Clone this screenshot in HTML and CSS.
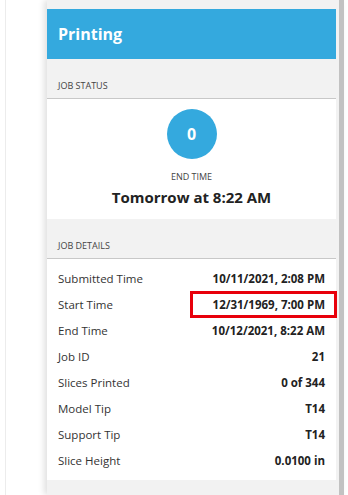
FILE: index.html
```html
<!DOCTYPE html>
<html lang="en">
<head>
    <meta charset="UTF-8">
    <meta name="viewport" content="width=device-width, initial-scale=1.0">
    <title>Printing</title>
    <link rel="stylesheet" href="styles.css">
</head>
<body>
    <div class="page">
        <!-- left gutter -->
        <div class="gutter"></div>

        <!-- job panel -->
        <aside class="panel">
            <div class="panel-inner">
                <header class="panel-header">Printing</header>

                <div class="section-title">Job Status</div>
                <section class="status">
                    <div class="badge">0</div>
                    <div class="status-label">End Time</div>
                    <div class="status-value">Tomorrow at 8:22 AM</div>
                </section>

                <div class="section-title">Job Details</div>
                <section class="details">
                    <div class="row"><span>Submitted Time</span><b>10/11/2021, 2:08 PM</b></div>
                    <div class="row highlight"><span>Start Time</span><b>12/31/1969, 7:00 PM</b></div>
                    <div class="row"><span>End Time</span><b>10/12/2021, 8:22 AM</b></div>
                    <div class="row"><span>Job ID</span><b>21</b></div>
                    <div class="row"><span>Slices Printed</span><b>0 of 344</b></div>
                    <div class="row"><span>Model Tip</span><b>T14</b></div>
                    <div class="row"><span>Support Tip</span><b>T14</b></div>
                    <div class="row"><span>Slice Height</span><b>0.0100 in</b></div>
                </section>
            </div>
            <div class="scrollbar"></div>
        </aside>
    </div>
</body>
</html>
```

FILE: styles.css
```css
* {
    margin: 0;
    padding: 0;
    box-sizing: border-box;
    font-family: "Open Sans", "Noto Sans", sans-serif;
}

body {
    background-color: #fff;
    color: #333;
}

.page {
    display: flex;
    height: 495px;
    overflow: hidden;
}

.gutter {
    flex-shrink: 0;
    border-left: 1px solid #ececec;
    margin-left: 5px;
    width: 42px;
}

/* panel */
.panel {
    display: flex;
    width: 297px;
    background-color: #f2f2f2;
    box-shadow: -3px 0 6px rgba(0, 0, 0, 0.12);
    position: relative;
    z-index: 1;
}

.panel-inner {
    width: 292px;
    padding-top: 9px;
    padding-right: 3px;
}

.scrollbar {
    width: 5px;
    background-color: #c2c2c2;
}

.panel-header {
    height: 50px;
    background-color: #34a9de;
    color: #fff;
    font-size: 16px;
    font-weight: 700;
    padding-left: 11px;
    display: flex;
    align-items: center;
}

.section-title {
    height: 40px;
    padding: 0 11px 6px;
    display: flex;
    align-items: flex-end;
    font-size: 9px;
    text-transform: uppercase;
    color: #444;
    border-bottom: 1px solid #c8c8c8;
}

/* job status */
.status {
    background-color: #fff;
    height: 120px;
    display: flex;
    flex-direction: column;
    align-items: center;
    padding-top: 10px;
}

.badge {
    width: 50px;
    height: 50px;
    border-radius: 50%;
    background-color: #34a9de;
    color: #fff;
    font-size: 16px;
    font-weight: 700;
    display: flex;
    align-items: center;
    justify-content: center;
}

.status-label {
    margin-top: 11px;
    font-size: 9px;
    text-transform: uppercase;
    color: #444;
}

.status-value {
    margin-top: 4px;
    font-size: 15px;
    font-weight: 700;
    color: #222;
}

/* job details */
.details {
    background-color: #fff;
    padding: 6px 11px 7px;
}

.details .row {
    height: 26px;
    display: flex;
    justify-content: space-between;
    align-items: center;
    font-size: 11.5px;
    position: relative;
}

.details .row span {
    color: #333;
}

.details .row b {
    color: #222;
    font-weight: 700;
}

.details .row.highlight::after {
    content: "";
    position: absolute;
    left: 132px;
    right: -12px;
    top: 0;
    bottom: -1px;
    border: 3px solid #e8000b;
}
```
